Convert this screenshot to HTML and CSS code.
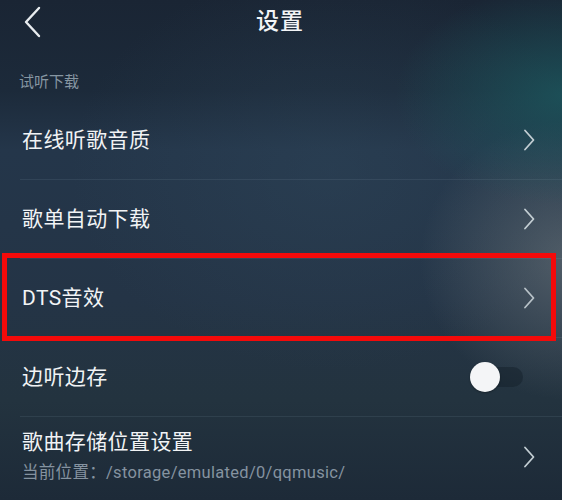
FILE: index.html
```html
<!DOCTYPE html>
<html lang="zh-CN">
<head>
<meta charset="utf-8">
<title>设置</title>
<link rel="stylesheet" href="styles.css">
</head>
<body>
<div class="screen">
  <header class="topbar">
    <span class="back">
      <svg width="18" height="32" viewBox="0 0 18 32"><polyline points="15,2 2,16 15,30" fill="none" stroke="#e8ecef" stroke-width="2.4" stroke-linecap="round" stroke-linejoin="round"/></svg>
    </span>
    <h1 class="title">设置</h1>
  </header>
  <div class="section-label">试听下载</div>
  <ul class="list">
    <li class="row">
      <span class="row-text">在线听歌音质</span>
      <span class="chev"><svg width="12" height="22" viewBox="0 0 12 22"><polyline points="2,1.5 10.5,11 2,20.5" fill="none" stroke="#c3ced3" stroke-width="1.8" stroke-linecap="round" stroke-linejoin="round"/></svg></span>
    </li>
    <li class="row">
      <span class="row-text">歌单自动下载</span>
      <span class="chev"><svg width="12" height="22" viewBox="0 0 12 22"><polyline points="2,1.5 10.5,11 2,20.5" fill="none" stroke="#c3ced3" stroke-width="1.8" stroke-linecap="round" stroke-linejoin="round"/></svg></span>
    </li>
    <li class="row highlighted">
      <span class="row-text">DTS音效</span>
      <span class="chev"><svg width="12" height="22" viewBox="0 0 12 22"><polyline points="2,1.5 10.5,11 2,20.5" fill="none" stroke="#b8c2c8" stroke-width="1.8" stroke-linecap="round" stroke-linejoin="round"/></svg></span>
    </li>
    <li class="row">
      <span class="row-text">边听边存</span>
      <span class="toggle"><span class="knob"></span></span>
    </li>
    <li class="row tall">
      <span class="row-main">
        <span class="row-text">歌曲存储位置设置</span>
        <span class="row-sub">当前位置：/storage/emulated/0/qqmusic/</span>
      </span>
      <span class="chev"><svg width="12" height="22" viewBox="0 0 12 22"><polyline points="2,1.5 10.5,11 2,20.5" fill="none" stroke="#c3ced3" stroke-width="1.8" stroke-linecap="round" stroke-linejoin="round"/></svg></span>
    </li>
  </ul>
</div>
</body>
</html>
```

FILE: styles.css
```css
html, body {
  margin: 0;
  padding: 0;
}
body {
  width: 562px;
  height: 500px;
  overflow: hidden;
  font-family: Roboto, "Noto Sans CJK SC", sans-serif;
  color: #f1f3f5;
}
.screen {
  width: 562px;
  height: 500px;
  overflow: hidden;
  background:
    radial-gradient(ellipse 170px 110px at 565px 95px, rgba(28, 88, 94, 0.8), rgba(28, 88, 94, 0) 100%),
    radial-gradient(ellipse 150px 140px at 570px 260px, rgba(110, 120, 125, 0.6), rgba(110, 120, 125, 0) 100%),
    radial-gradient(ellipse 260px 200px at 330px 170px, rgba(50, 75, 95, 0.35), rgba(50, 75, 95, 0) 100%),
    linear-gradient(180deg, #1a2534 0%, #1c2a3a 18%, #24364a 30%, #243446 60%, #23333f 80%, #1d2a38 100%);
}
.topbar {
  height: 42px;
  display: flex;
  align-items: center;
  justify-content: center;
  position: relative;
}
.back {
  position: absolute;
  left: 24px;
  top: 6px;
  display: flex;
}
.title {
  margin: 0;
  font-size: 23px;
  font-weight: 500;
  letter-spacing: 1px;
  line-height: 1;
  padding-right: 2px;
  color: #f2f4f6;
}
.section-label {
  height: 59px;
  box-sizing: border-box;
  padding: 30px 0 0 19px;
  font-size: 15px;
  line-height: 20px;
  color: #8696a2;
}
.list {
  list-style: none;
  margin: 0;
  padding: 0;
}
.row {
  height: 79px;
  box-sizing: border-box;
  margin-left: 20px;
  padding: 0 27px 0 2px;
  display: flex;
  align-items: center;
  justify-content: space-between;
  border-bottom: 1px solid rgba(150, 175, 190, 0.12);
  position: relative;
}
.row:last-child {
  border-bottom: none;
}
.row.tall {
  height: 80px;
}
.row-text {
  font-size: 21px;
  line-height: 28px;
  letter-spacing: 0.4px;
  color: #f1f3f5;
}
.row-main {
  display: flex;
  flex-direction: column;
  gap: 7px;
  margin-top: -3px;
}
.row-sub {
  font-size: 16.5px;
  line-height: 20px;
  letter-spacing: 0.3px;
  color: #8593a0;
}
.chev {
  display: flex;
}
.highlighted::after {
  content: "";
  position: absolute;
  left: -18px;
  right: 6px;
  top: -6px;
  bottom: -4px;
  border: 5px solid #f40a0a;
  pointer-events: none;
}
.toggle {
  width: 44px;
  height: 20px;
  border-radius: 10px;
  background: rgba(20, 32, 42, 0.5);
  position: relative;
  margin-right: 12px;
}
.knob {
  position: absolute;
  left: -9px;
  top: -5px;
  width: 30px;
  height: 30px;
  border-radius: 50%;
  background: #f4f5f7;
  box-shadow: 0 1px 2px rgba(0, 0, 0, 0.3);
}
```
